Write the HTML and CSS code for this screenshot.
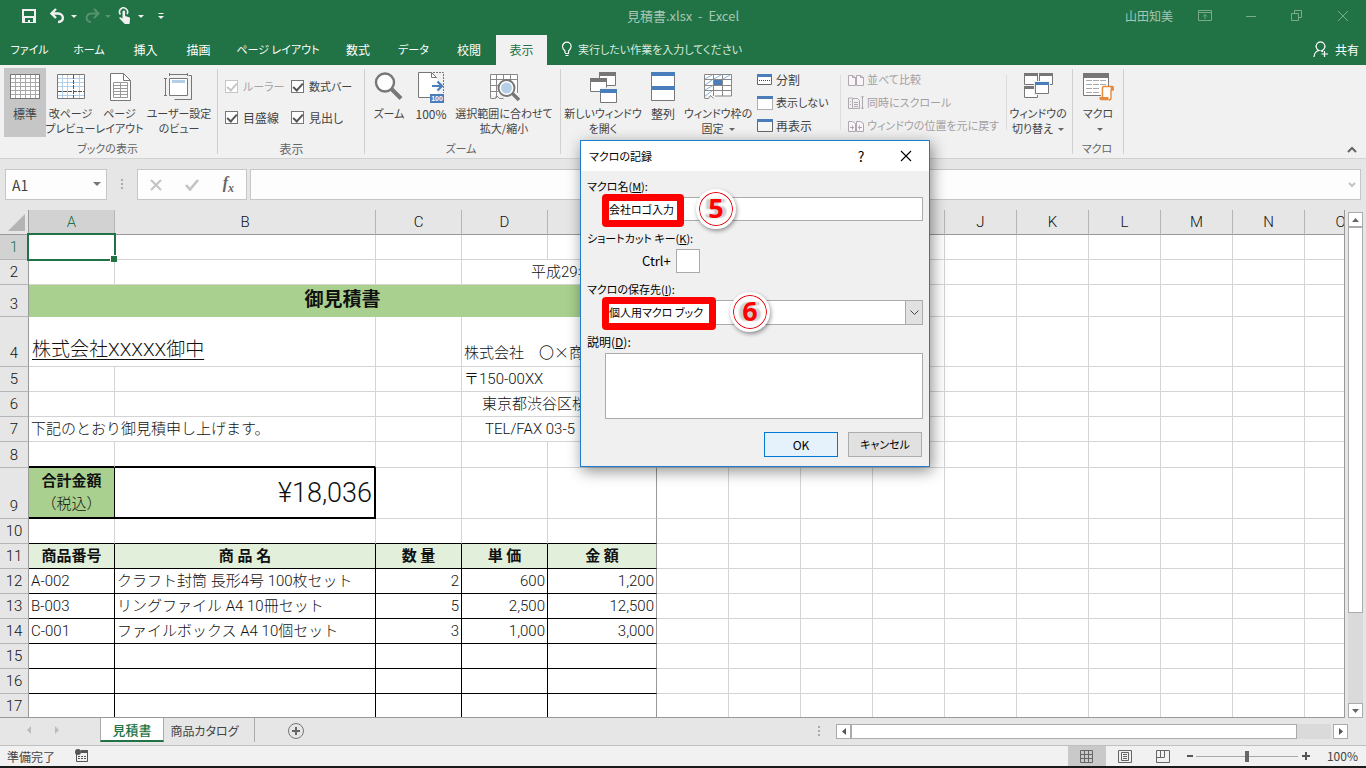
FILE: index.html
```html
<!DOCTYPE html>
<html lang="ja">
<head>
<meta charset="utf-8">
<title>見積書.xlsx - Excel</title>
<link rel="stylesheet" href="styles.css">
</head>
<body>
<div class="app">
  <header class="titlebar">
    <div class="quick">
      <button class="qbtn" aria-label="上書き保存"><svg width="16" height="16" viewBox="0 0 16 16"><path d="M1 1h14v14H1z" fill="#f1f1f1"/><path d="M3 3h10v5H3zM4 10h8v4H9v-2H7v2H4z" fill="#217346"/></svg></button>
      <button class="qbtn wide" aria-label="元に戻す"><svg width="28" height="16" viewBox="0 0 28 16"><path d="M3 5.500H9C15 5.500 16 14 9 14M7 1 2.500 5.500 7 10" fill="none" stroke="#f1f1f1" stroke-width="2.400"/><path d="M22 7h6l-3 3z" fill="#f1f1f1"/></svg></button>
      <button class="qbtn wide dim" aria-label="やり直し"><svg width="28" height="16" viewBox="0 0 28 16"><path d="M14 5.500H9C2 5.500 2 14 8 14M11 1l4.500 4.500L11 10" fill="none" stroke="#f1f1f1" stroke-width="2"/><path d="M22 7h6l-3 3z" fill="#f1f1f1"/></svg></button>
      <button class="qbtn touch" aria-label="タッチ/マウス モードの切り替え"><svg width="28" height="18" viewBox="0 0 28 18"><path d="M3.500 7.500A4 4 0 1 1 10 7" fill="none" stroke="#f1f1f1" stroke-width="1.600"/><path d="M5.500 5c0-2 2.600-2 2.600 0v4l4 1.200c1 .4 1 1 .9 2L12.500 17H7.800L2.500 11.600c-.6-1 .4-1.800 1.400-1.200l1.600 1z" fill="#f1f1f1"/><path d="M21 8h6l-3 3z" fill="#f1f1f1"/></svg></button>
      <button class="qbtn" aria-label="クイック アクセス ツール バーのユーザー設定"><svg width="8" height="8" viewBox="0 0 8 8"><path d="M1.500 1.500h5" stroke="#f1f1f1"/><path d="M1 4h6L4 7z" fill="#f1f1f1"/></svg></button>
    </div>
    <h1 class="doc">見積書.xlsx&nbsp; -&nbsp; Excel</h1>
    <div class="account">
      <span class="user">山田知美</span>
      <button class="win" aria-label="リボンの表示オプション"><svg width="14" height="12" viewBox="0 0 14 12"><path d="M.5.500h13v10H.5zM.5 2.500h13M7 9V4.500M5 6.500l2-2 2 2" fill="none" stroke="#7aab8d"/></svg></button>
      <button class="win" aria-label="最小化"><svg width="12" height="12" viewBox="0 0 12 12"><path d="M1 6.500h10" stroke="#7aab8d"/></svg></button>
      <button class="win" aria-label="元に戻す（縮小）"><svg width="12" height="12" viewBox="0 0 12 12"><path d="M.5 3.500h7v7h-7zM3.500 3V.500h7v7H8" fill="none" stroke="#7aab8d"/></svg></button>
      <button class="win" aria-label="閉じる"><svg width="12" height="12" viewBox="0 0 12 12"><path d="M1 1l10 10M11 1 1 11" stroke="#7aab8d"/></svg></button>
    </div>
  </header>

  <nav class="menubar">
    <div class="tabs">
      <button class="kn">ファイル</button><button class="kn">ホーム</button><button>挿入</button><button>描画</button><button class="kn">ページ レイアウト</button><button>数式</button><button class="kn">データ</button><button>校閲</button><button class="on">表示</button>
    </div>
    <button class="tell kn"><svg width="12" height="16" viewBox="0 0 12 16"><path d="M4 12V10C2.500 8.500 1.500 7.500 1.500 5.500a4.300 4.300 0 0 1 8.600 0C10.100 7.500 9 8.500 7.600 10v2M4 12.500h4M4.500 14.500h3" fill="none" stroke="#fff" stroke-width="1.200"/></svg>実行したい作業を入力してください</button>
    <button class="share"><svg width="16" height="17" viewBox="0 0 16 17"><path d="M1 16c.3-4 2-6 5-6.500A4.400 4.400 0 1 1 9 9.500M11.500 10v6M8.500 13h6.500M8 9.600l2 1" fill="none" stroke="#fff" stroke-width="1.200"/></svg>共有</button>
  </nav>

  <section class="ribbon">
    <div class="group g-view">
      <div class="items">
        <button class="big w42 on"><svg width="32" height="32" viewBox="0 0 32 32"><path d="M1.500 3.500h29v24h-29z" fill="#fff" stroke="#777"/><path d="M2 7.500h28M2 11.500h28M2 15.500h28M2 19.500h28M2 23.500h28M6.500 4v23M11.500 4v23M16.500 4v23M21.500 4v23M26.500 4v23" stroke="#a8a8a8"/><path d="M1.500 3.500h29v24h-29z" fill="none" stroke="#777"/></svg><span>標準</span></button>
        <button class="big w49 kn"><svg width="32" height="32" viewBox="0 0 32 32"><path d="M2.500 3.500h27v24h-27z" fill="#fff"/><path d="M3 7.500h26M3 11.500h26M3 15.500h26M3 24.500h26M7.500 4v23M12.500 4v23M24.500 4v23" stroke="#b5cfe9"/><path d="M3 20.500h26M18.500 4v23" stroke="#555" stroke-dasharray="4 1"/><path d="M2.500 3.500h27v24h-27z" fill="none" stroke="#777"/></svg><span>改ページ<br>プレビュー</span></button>
        <button class="big w49 kn"><svg width="32" height="32" viewBox="0 0 32 32"><path d="M6.500 2.500h13l7 7v20h-20z" fill="#fff" stroke="#777"/><path d="M19.500 2.500v7h7" fill="none" stroke="#777"/><path d="M9.500 11.500h14v15h-14zM9.500 14.500h14M9.500 17.500h14M9.500 20.500h14M9.500 23.500h14M16.500 12v14" fill="none" stroke="#999"/></svg><span>ページ<br>レイアウト</span></button>
        <button class="big w70 kn"><svg width="32" height="32" viewBox="0 0 32 32"><path d="M11.500 28.500h17v-24h-3" fill="none" stroke="#777"/><path d="M6.500 7.500h18v17h-18z" fill="#fff" stroke="#777"/><path d="M9 9h13v3H9z" fill="#b5cfe9"/><path d="M6.500 3.500h18M6.500 2v3M24.500 2v3M2.500 7.500v17M1 7.500h3M1 24.500h3" stroke="#777"/></svg><span>ユーザー設定<br>のビュー</span></button>
      </div>
      <div class="cap kn">ブックの表示</div>
    </div>
    <div class="group g-show">
      <div class="checks">
        <label class="off kn"><input type="checkbox" checked disabled>ルーラー</label>
        <label class="kn"><input type="checkbox" checked>数式バー</label>
        <label><input type="checkbox" checked>目盛線</label>
        <label><input type="checkbox" checked>見出し</label>
      </div>
      <div class="cap">表示</div>
    </div>
    <div class="group g-zoom">
      <div class="items">
        <button class="big w42 kn"><svg width="32" height="32" viewBox="0 0 32 32"><circle cx="12" cy="11.500" r="9" fill="#fff" stroke="#777" stroke-width="2.400"/><path d="M18.500 18 28 27.500" stroke="#777" stroke-width="4"/></svg><span>ズーム</span></button>
        <button class="big w42"><svg width="32" height="32" viewBox="0 0 32 32"><path d="M3.500 1.500h12l7 7v18h-19z" fill="#fff"/><path d="M15 26.500H3.500v-25h13v5h5" fill="none" stroke="#777"/><path d="M16.500 1.500l5 5" stroke="#777"/><path d="M18 1.500h10.500V22" fill="none" stroke="#777" stroke-dasharray="2 1"/><path d="M17 15h10M22.500 10.500 27 15l-4.500 4.500" fill="none" stroke="#4a7ebb" stroke-width="2.200"/><rect x="15" y="23" width="14" height="9" fill="#4a7ebb"/><text x="22" y="30" text-anchor="middle" class="tiny">100</text></svg><span>100%</span></button>
        <button class="big w104 kn"><svg width="32" height="32" viewBox="0 0 32 32"><path d="M2.500 3.500h27v21h-27z" fill="#fff"/><path d="M2.500 27V3.500h27V22M3 8.500h26M3 14.500h7M3 20.500h7M8.500 4v23M15.500 4v5M22.500 4v5M2.500 27.500h5l1-3 3 3h4" fill="none" stroke="#888"/><circle cx="18.500" cy="17" r="8" fill="#fff" stroke="#777" stroke-width="2"/><circle cx="18.500" cy="17" r="5.500" fill="#b5cfe9"/><path d="M24.500 22.500 31 29" stroke="#777" stroke-width="3.500"/></svg><span>選択範囲に合わせて<br>拡大/縮小</span></button>
      </div>
      <div class="cap kn">ズーム</div>
    </div>
    <div class="group g-window">
      <div class="items">
        <button class="big w78 kn"><svg width="32" height="32" viewBox="0 0 32 32"><g fill="#fff" stroke="#777"><path d="M12.500 2.500h16v12h-16z"/><path d="M3.500 7.500h16v13h-16z"/><path d="M13.500 19.500h16v12h-16z"/></g><path d="M12 1h17v4H12zM3 7h17v4H3z" fill="#777"/><path d="M12.500 17.500h18" stroke="#f1f1f1" stroke-width="2"/><path d="M13 18h17v4H13z" fill="#4a7ebb"/></svg><span>新しいウィンドウ<br>を開く</span></button>
        <button class="big w42"><svg width="32" height="32" viewBox="0 0 32 32"><path d="M4.500 1.500h23v28h-23z" fill="#fff" stroke="#777"/><path d="M4 1h24v4H4zM4 15h24v4H4z" fill="#4a7ebb"/></svg><span>整列</span></button>
        <button class="big w68 kn"><svg width="32" height="32" viewBox="0 0 32 32"><path d="M2.500 3.500h27v21h-27z" fill="#fff"/><path d="M2.500 27V3.500h27V25H13M3 8.500h26M3 14.500h26M3 19.500h26M11.500 4v21M20.500 4v21M2.500 27.500h4l2-3 3 3" fill="none" stroke="#888"/><path d="m3 8 7-4M12 8l7-4M21 8l7-4M3 14l7-5M3 19l7-4M3 25l7-5" stroke="#83b0e0"/><path d="M12 9h8v5h-8z" fill="#4a7ebb"/></svg><span>ウィンドウ枠の<br>固定<i class="dd"></i></span></button>
      </div>
      <div class="list">
        <button><svg width="16" height="16" viewBox="0 0 16 16"><path d="M.5 2.500h14v10H.5z" fill="#fff" stroke="#666"/><path d="M0 2h15v3H0z" fill="#4a7ebb"/><path d="M2 8.500h11" stroke="#444" stroke-dasharray="1 1"/></svg>分割</button>
        <button class="kn"><svg width="16" height="16" viewBox="0 0 16 16"><path d="M.5 2.500h15v12H.5z" fill="#fff" stroke="#666" stroke-dasharray="1 1"/><path d="M0 1h16v3H0z" fill="#4a7ebb"/></svg>表示しない</button>
        <button><svg width="16" height="16" viewBox="0 0 16 16"><path d="M.5 2.500h15v11H.5z" fill="#f6f6f6" stroke="#666"/><path d="M0 1h16v3H0z" fill="#4a7ebb"/></svg>再表示</button>
      </div>
      <div class="list dim kn">
        <button disabled><svg width="16" height="16" viewBox="0 0 16 16"><path d="M.5 3.500h4l3 2v8h-7zM8.500 3.500h4l3 2v8h-7zM4.500 3.500v2h3M12.500 3.500v2h3" fill="#f8f4f8" stroke="#b0a8b0"/></svg>並べて比較</button>
        <button disabled><svg width="16" height="16" viewBox="0 0 16 16"><path d="M4.500 3H.5v10.500h4M4.500 3.500h5l2 2v8h-7zM6 7.500h4M6 9.500h4M6 11.500h4M2 6.500h1M2 9.500h1M14.500 1v13M13 2.500 14.500 1 16 2.500M13 12.500l1.500 1.500 1.500-1.500" fill="none" stroke="#b0a8b0"/></svg>同時にスクロール</button>
        <button disabled><svg width="16" height="16" viewBox="0 0 16 16"><path d="M.5 3.500h4l3 2v8h-7zM8.500 3.500h4l3 2v8h-7zM2 9.500h4M4.500 7.500v4M10 9.500h4M11.500 7.500v4" fill="#f8f4f8" stroke="#b0a8b0"/></svg>ウィンドウの位置を元に戻す</button>
      </div>
      <div class="items">
        <button class="big w62 kn"><svg width="32" height="32" viewBox="0 0 32 32"><g fill="#fff" stroke="#777"><path d="M2.500 2.500h13v11h-13zM17.500 2.500h13v11h-13zM2.500 15.500h13v11h-13z"/></g><path d="M2 2h14v3H2zM17 2h14v3H17zM2 15h14v3H2z" fill="#777"/><path d="M12 10h16v14H12z" fill="#f1f1f1"/><path d="M13.500 11.500h13v11h-13z" fill="#fff" stroke="#777"/><path d="M13 11h14v3H13z" fill="#4a7ebb"/></svg><span>ウィンドウの<br>切り替え<i class="dd"></i></span></button>
      </div>
    </div>
    <div class="group g-macro">
      <div class="items">
        <button class="big w42 kn"><svg width="32" height="32" viewBox="0 0 32 32"><path d="M1.500 2.500h25v22h-25z" fill="#fff" stroke="#777"/><path d="M1 2h26v5H1z" fill="#777"/><path d="M4 9.500h6M11 9.500h6M18 9.500h6M4 13.500h6M11 13.500h6M18 13.500h6M4 17.500h6M11 17.500h6M4 21.500h6M11 21.500h6" stroke="#aaa"/><path d="M20 17h11v3h-2v8c0 1-1 2-2 2H18v-3h2z" fill="#fff" stroke="#f1f1f1" stroke-width="2"/><path d="M20.500 26V17c0-1 .5-1.500 1.500-1.500h8c1 0 1.500 1 1 3.500h-2v7.500c0 2-1 2.500-2 2.500" fill="#fff" stroke="#e8883a" stroke-width="1.400"/><path d="M17.500 26h9v2.500h1.500v.8h-9c-1 0-2-1.300-1.500-3.300zM28.500 15.500h3v3.500h-2.500z" fill="#e8883a"/></svg><span>マクロ<br><i class="dd"></i></span></button>
      </div>
      <div class="cap kn">マクロ</div>
    </div>
    <button class="collapse" aria-label="リボンを折りたたむ"><svg width="10" height="8" viewBox="0 0 10 8"><path d="M1 6l4-4 4 4" fill="none" stroke="#666" stroke-width="2"/></svg></button>
  </section>

  <section class="formula">
    <div class="namebox"><input type="text" value="A1" aria-label="名前ボックス"><svg width="8" height="5" viewBox="0 0 8 5"><path d="M0 0h8L4 4z" fill="#777"/></svg></div>
    <span class="dots"></span>
    <div class="fx">
      <button aria-label="キャンセル"><svg width="12" height="12" viewBox="0 0 12 12"><path d="M1 1l10 10M11 1 1 11" stroke="#c3c3c3" stroke-width="2"/></svg></button>
      <button aria-label="入力"><svg width="14" height="12" viewBox="0 0 14 12"><path d="M1 6l4 4.500L13 1" fill="none" stroke="#c3c3c3" stroke-width="2.600"/></svg></button>
      <button aria-label="関数の挿入" class="fxi">f<sub>x</sub></button>
    </div>
    <div class="bar"><input type="text" aria-label="数式バー"><svg width="8" height="6" viewBox="0 0 8 6"><path d="M1 1l3 3 3-3" fill="none" stroke="#c3c3c3" stroke-width="2"/></svg></div>
  </section>

  <main class="work">
    <div class="sheet">
      <table class="grid">
        <colgroup><col class="c-h"><col class="c-a"><col class="c-b"><col class="c-a"><col class="c-a"><col class="c-e"><col span="10" class="c-f"></colgroup>
        <thead><tr><th class="corner"><svg width="17" height="17" viewBox="0 0 17 17"><path d="M17 0v17H0z" fill="#b4b4b4"/></svg></th><th class="sel">A</th><th>B</th><th>C</th><th>D</th><th>E</th><th>F</th><th>G</th><th>H</th><th>I</th><th>J</th><th>K</th><th>L</th><th>M</th><th>N</th><th>O</th></tr></thead>
        <tbody>
          <tr><th class="sel">1</th><td class="cur"><span class="cursor"></span></td><td></td><td></td><td></td><td class="pb"></td></tr>
          <tr><th>2</th><td></td><td></td><td></td><td colspan="2" class="pb date">平成29年</td></tr>
          <tr class="r3"><th>3</th><td colspan="5" class="pb title">御見積書</td></tr>
          <tr class="r4"><th>4</th><td colspan="2" class="client"><u>株式会社XXXXX御中</u></td><td></td><td colspan="2" class="pb">株式会社　〇<span class="jp">×</span>商</td></tr>
          <tr><th>5</th><td></td><td></td><td></td><td colspan="2" class="pb">〒150-00XX</td></tr>
          <tr><th>6</th><td></td><td></td><td></td><td colspan="2" class="pb indent">東京都渋谷区桜</td></tr>
          <tr><th>7</th><td colspan="2">下記のとおり御見積申し上げます。</td><td></td><td colspan="2" class="pb tel">TEL/FAX 03-5</td></tr>
          <tr class="r8"><th>8</th><td class="b2"></td><td class="b2"></td><td></td><td></td><td class="pb"></td></tr>
          <tr class="r9"><th>9</th><td class="b2 sumh"><b>合計金額</b><br>（税込）</td><td class="b2 sum">¥18,036</td><td></td><td></td><td class="pb"></td></tr>
          <tr class="b1"><th>10</th><td></td><td></td><td></td><td></td><td class="pb"></td></tr>
          <tr class="b1 ln hd"><th>11</th><td>商品番号</td><td>商 品 名</td><td>数 量</td><td>単 価</td><td class="pb">金 額</td></tr>
          <tr class="b1 ln"><th>12</th><td>A-002</td><td>クラフト封筒 長形4号 100枚セット</td><td class="n">2</td><td class="n">600</td><td class="pb n">1,200</td></tr>
          <tr class="b1 ln"><th>13</th><td>B-003</td><td>リングファイル A4 10冊セット</td><td class="n">5</td><td class="n">2,500</td><td class="pb n">12,500</td></tr>
          <tr class="b1 ln"><th>14</th><td>C-001</td><td>ファイルボックス A4 10個セット</td><td class="n">3</td><td class="n">1,000</td><td class="pb n">3,000</td></tr>
          <tr class="b1 ln"><th>15</th><td></td><td></td><td></td><td></td><td class="pb"></td></tr>
          <tr class="b1 ln"><th>16</th><td></td><td></td><td></td><td></td><td class="pb"></td></tr>
          <tr class="b1 ln"><th>17</th><td></td><td></td><td></td><td></td><td class="pb"></td></tr>
        </tbody>
      </table>
    </div>
    <div class="vscroll">
      <button aria-label="上へ"><svg width="7" height="4" viewBox="0 0 7 4"><path d="M0 4h7L3.500 0z" fill="#666"/></svg></button>
      <div class="vtrack"><div class="vthumb"></div></div>
      <button aria-label="下へ"><svg width="7" height="4" viewBox="0 0 7 4"><path d="M0 0h7L3.500 4z" fill="#666"/></svg></button>
    </div>
  </main>

  <div class="sheetbar">
    <div class="nav"><button aria-label="前のシート"><svg width="5" height="8" viewBox="0 0 5 8"><path d="M5 0v8L1 4z" fill="#bbb"/></svg></button><button aria-label="次のシート"><svg width="5" height="8" viewBox="0 0 5 8"><path d="M0 0v8l4-4z" fill="#bbb"/></svg></button></div>
    <button class="stab on">見積書</button><button class="stab">商品カタログ</button>
    <button class="add" aria-label="新しいシート"><svg width="18" height="18" viewBox="0 0 18 18"><circle cx="9" cy="9" r="7.500" fill="none" stroke="#777"/><path d="M9 5v8M5 9h8" stroke="#666" stroke-width="2"/></svg></button>
    <span class="dots"></span>
    <div class="hscroll">
      <button aria-label="左へ"><svg width="4" height="7" viewBox="0 0 4 7"><path d="M4 0v7L0 3.500z" fill="#555"/></svg></button>
      <div class="htrack"><div class="hthumb"></div></div>
      <button aria-label="右へ"><svg width="4" height="7" viewBox="0 0 4 7"><path d="M0 0v7l4-3.500z" fill="#555"/></svg></button>
    </div>
  </div>

  <footer class="status">
    <span>準備完了</span>
    <svg class="rec" width="14" height="14" viewBox="0 0 14 14"><path d="M1.500 5v7.500h11v-10H6M6 3h7" fill="none" stroke="#555"/><path d="M6 1h7v3H6z" fill="#555"/><circle cx="3" cy="3" r="3" fill="#555"/><path d="M3 7.500h2M6 7.500h2M9 7.500h2M3 9.500h2M6 9.500h2M9 9.500h2" stroke="#555"/></svg>
    <div class="views">
      <button class="on" aria-label="標準"><svg width="14" height="14" viewBox="0 0 14 14"><path d="M.5 1.500h12v12H.5zM.5 5.500h12M.5 9.500h12M4.500 1.500v12M8.500 1.500v12" fill="none" stroke="#666"/></svg></button>
      <button aria-label="ページ レイアウト"><svg width="14" height="14" viewBox="0 0 14 14"><path d="M.5 1.500h13v12H.5zM3.500 3.500h7v8h-7zM5 5.500h4M5 7.500h4M5 9.500h4" fill="none" stroke="#666"/></svg></button>
      <button aria-label="改ページ プレビュー"><svg width="14" height="14" viewBox="0 0 14 14"><path d="M.5 1.500h13v12H.5zM.5 8.500h8v-7M4.500 1.500v7" fill="none" stroke="#666"/></svg></button>
    </div>
    <button class="zb" aria-label="縮小"><svg width="8" height="8" viewBox="0 0 8 8"><path d="M1 4h6" stroke="#555" stroke-width="2"/></svg></button>
    <input class="zoom" type="range" min="0" max="100" value="50" aria-label="ズーム">
    <button class="zb" aria-label="拡大"><svg width="8" height="8" viewBox="0 0 8 8"><path d="M0 4h8M4 0v8" stroke="#555" stroke-width="2"/></svg></button>
    <span class="pct">100%</span>
  </footer>
</div>

<form class="dialog" role="dialog" aria-labelledby="dlg-title">
  <div class="dhead"><span id="dlg-title">マクロの記録</span><button type="button" class="help">?</button><button type="button" aria-label="閉じる"><svg width="12" height="12" viewBox="0 0 12 12"><path d="M1 1l10 10M11 1 1 11" stroke="#000" stroke-width="1.100"/></svg></button></div>
  <div class="dbody">
    <label for="m-name">マクロ名(<u>M</u>):</label>
    <div class="field"><input id="m-name" type="text" value="会社ロゴ入力"><span class="mark m5"></span><span class="num n5">5</span></div>
    <label for="m-key">ショートカット キー(<u>K</u>):</label>
    <div class="field key"><span>Ctrl+</span><input id="m-key" type="text"></div>
    <label for="m-store">マクロの保存先(<u>I</u>):</label>
    <div class="field"><select id="m-store"><option>個人用マクロ ブック</option></select><span class="arrow"><svg width="9" height="6" viewBox="0 0 9 6"><path d="M.5.500l4 4 4-4" fill="none" stroke="#444"/></svg></span><span class="mark m6"></span><span class="num n6">6</span></div>
    <label for="m-desc" class="kj">説明(<u>D</u>):</label>
    <div class="field"><textarea id="m-desc"></textarea></div>
    <div class="acts"><button type="button" class="ok">OK</button><button type="button">キャンセル</button></div>
  </div>
</form>
<script src="grid.js"></script>
</body>
</html>
```
FILE: styles.css
```css
* { box-sizing: border-box; }
body { margin: 0; font: 12px/15px "Noto Sans CJK JP", "Liberation Sans", sans-serif; font-feature-settings: "palt"; color: #444; }
button, input, select, textarea { font: inherit; font-feature-settings: inherit; color: inherit; margin: 0; padding: 0; border: 0; background: none; border-radius: 0; outline: 0; white-space: nowrap; }
svg { display: block; flex: none; }
.kn { font-size: 11px; }
.app { display: flex; flex-direction: column; height: 100vh; min-height: 480px; overflow: hidden; background: #e6e6e6; border-bottom: 2px solid #1a1a1a; }

.titlebar { flex: none; display: grid; grid-template-columns: 1fr auto 1fr; align-items: center; height: 32px; background: #217346; }
.quick { display: flex; align-items: center; padding-left: 21px; }
.qbtn { width: 16px; margin-right: 12px; }
.qbtn.wide { width: 28px; margin-right: 6px; }
.qbtn.touch { width: 28px; margin-right: 12px; }
.dim.qbtn { opacity: .25; }
.doc { margin: 0; padding-bottom: 2px; font-size: 13px; font-weight: 400; color: #a6c7b3; }
.account { display: flex; justify-content: flex-end; align-items: center; color: #a6c7b3; }
.user { margin-right: 9px; padding-bottom: 2px; }
.win { width: 46px; display: flex; justify-content: center; }

.menubar { flex: none; display: flex; height: 33px; padding-top: 3px; background: #217346; color: #fff; }
.tabs { display: grid; grid-template-columns: 59px 60px 53px 53px 106px 54px 57px 54px 51px; }
.menubar button { padding-bottom: 2px; }
.tabs .on { background: #f1f1f1; color: #217346; }
.tell { display: flex; align-items: center; gap: 5px; margin-left: 14px; color: #d9e9df; }
.share { display: flex; align-items: center; gap: 6px; margin-left: auto; margin-right: 7px; }

.ribbon { flex: none; display: flex; height: 94px; background: #f1f1f1; border-bottom: 1px solid #d2d2d2; }
.group { flex: none; display: flex; flex-wrap: wrap; align-content: space-between; height: 85px; margin-top: 4px; border-right: 1px solid #d0d0d0; }
.g-view { width: 218px; padding-left: 4px; }
.g-show { width: 147px; padding-left: 7px; }
.g-zoom { width: 196px; padding-left: 3px; }
.g-window { width: 512px; padding-left: 3px; flex-wrap: nowrap; align-items: flex-start; }
.g-macro { width: 51px; padding-left: 4px; }
.cap { width: 100%; padding-right: 6px; line-height: 11px; text-align: center; color: #666; }
.items { display: flex; margin-top: -1px; }
.big { display: flex; flex-direction: column; align-items: center; gap: 3px; height: 69px; padding-top: 3px; }
.big.on { background: #c6c6c6; }
.w42 { width: 42px; } .w49 { width: 49px; } .w62 { width: 62px; } .w68 { width: 68px; } .w70 { width: 70px; } .w78 { width: 78px; } .w104 { width: 104px; }
.tiny { font: bold 7px "Liberation Sans", sans-serif; fill: #fff; }
.dd { display: inline-block; margin: 0 0 2px 5px; border: 3px solid transparent; border-top-color: #666; border-bottom: 0; }
.checks { display: grid; grid-template-columns: 66px 66px; grid-auto-rows: 31px; padding-top: 2px; }
.checks label { display: flex; align-items: center; gap: 5px; white-space: nowrap; }
.checks .off { color: #a6a6a6; }
.checks input { appearance: none; flex: none; width: 13px; height: 13px; border: 1px solid #777; background: #fff; display: grid; place-content: center; }
.checks input::before { content: ""; width: 4px; height: 8px; margin-top: -2px; border: solid #555; border-width: 0 2px 2px 0; transform: rotate(42deg); }
.checks .off input, .checks .off input::before { border-color: #c6c6c6; }
.list { flex: none; display: flex; flex-direction: column; width: 83px; margin: -1px 0 0 5px; }
.list button { flex: none; display: flex; align-items: center; gap: 3px; height: 23px; }
.list.dim { width: 167px; height: 55px; margin: 6px 0 0 0; padding-left: 7px; border: solid #ddd; border-width: 0 1px; color: #a3a0a3; justify-content: center; }
.collapse { align-self: flex-end; margin: 0 9px 4px auto; width: 10px; }

.formula { flex: none; display: flex; align-items: flex-start; height: 51px; padding: 10px 5px 0 5px; }
.namebox, .fx, .bar { display: flex; align-items: center; height: 31px; border: 1px solid #c6c6c6; background: #fdfdfd; }
.namebox { width: 102px; padding: 0 5px 0 6px; }
.namebox input { flex: 1; min-width: 0; font-size: 14px; padding-top: 2px; }
.dots { width: 2px; height: 11px; margin: 10px 14px; background: repeating-linear-gradient(#aaa 0 2px, transparent 2px 4px); }
.fx { width: 110px; justify-content: space-between; padding: 0 12px; }
.fxi { padding-bottom: 3px; font: italic bold 16px/16px "Liberation Serif", serif; color: #666; }
.fxi sub { font-size: 12px; line-height: 1px; }
.bar { flex: 1; margin-left: 3px; padding-right: 4px; }
.bar input { flex: 1; }

.work { flex: 1; min-height: 0; display: flex; }
.sheet { flex: 1; min-width: 0; overflow: hidden; border-right: 1px solid #999; border-bottom: 1px solid #999; background: #fff; }
.grid { table-layout: fixed; width: 1377px; border-collapse: separate; border-spacing: 0; color: #111; font: 300 15px/22px Roboto, "Noto Sans CJK JP", sans-serif; font-feature-settings: normal; }
.c-h { width: 29px; } .c-a { width: 86px; } .c-b { width: 261px; } .c-e { width: 109px; } .c-f { width: 72px; }
.grid tr { height: 25px; }
.grid th, .grid td { padding: 0 2px 1px; border: solid #d4d4d4; border-width: 0 1px 1px 0; vertical-align: bottom; white-space: nowrap; text-align: left; }
.grid th { padding: 0 0 1px; background: #e6e6e6; font-weight: 300; text-align: center; border-color: #b5b5b5; }
.grid thead th { border-bottom-color: #999; }
.grid tbody th, .grid .corner { border-right-color: #999; }
.corner svg { margin: 0 0 2px 8px; }
.grid th.sel { background: #d2d2d2; color: #217346; }
.grid td.pb { border-right-color: #999; }
.grid .r3 { height: 32px; } .grid .r4 { height: 50px; } .grid .r8 { height: 26px; } .grid .r9 { height: 51px; }
.grid .r4 th, .grid .r4 td.pb { padding-bottom: 2px; }
.jp { font-family: "Noto Sans CJK JP", sans-serif; }
.grid .date { padding-left: 69px; }
.grid .title { background: #a9d08e; border-color: #a9d08e; font-size: 19px; line-height: 30px; font-weight: 700; text-align: center; }
.grid .client { font-size: 19px; line-height: 30px; padding-left: 3px; text-underline-offset: 3px; }
.grid .indent { padding-left: 20px; }
.grid .tel { padding-left: 23px; }
.grid td.b2 { border-bottom: 2px solid #000; }
.grid .sumh { background: #a9d08e; border-right-color: #000; text-align: center; line-height: 23px; }
.grid b { font-weight: 700; }
.grid .sum { border-right: 2px solid #000; text-align: right; font-size: 27px; line-height: 46px; }
.grid .b1 td:nth-child(-n+6) { border-bottom-color: #000; }
.grid .ln td:nth-child(-n+5) { border-right-color: #000; }
.grid .hd td:nth-child(-n+6) { background: #e2efda; font-weight: 700; text-align: center; }
.grid .n { text-align: right; }
.grid .cur { position: relative; }
.cursor { position: absolute; inset: -2px; border: 2px solid #217346; }
.cursor::after { content: ""; position: absolute; right: -3px; bottom: -3px; width: 6px; height: 6px; background: #217346; border: solid #fff; border-width: 1px 0 0 1px; }

.vscroll { flex: none; display: flex; flex-direction: column; width: 15px; margin: 2px 3px 0 3px; }
.vscroll button, .hscroll button { display: flex; align-items: center; justify-content: center; flex: none; width: 15px; height: 15px; border: 1px solid #ababab; background: #fff; }
.vtrack { flex: 1; background: #dadada; }
.vthumb { height: 81%; border: 1px solid #ababab; background: #fff; }

.sheetbar { flex: none; display: flex; height: 28px; border-bottom: 1px solid #c0c0c0; }
.nav { display: flex; gap: 24px; width: 100px; padding-left: 26px; }
.nav button { padding-bottom: 3px; }
.stab { width: 91px; height: 24px; }
.stab.on { width: 64px; background: #fff; color: #217346; font-size: 13px; font-weight: 500; border: solid #ababab; border-width: 0 1px; border-bottom: 2px solid #217346; }
.sheetbar .stab:not(.on) { border-right: 1px solid #ababab; padding-right: 9px; }
.add { margin: 0 0 1px 32px; width: 18px; align-self: center; }
.sheetbar .dots { margin: 8px 16px 0 auto; }
.hscroll { flex: none; display: flex; width: 38%; max-width: 512px; height: 15px; margin: 6px 18px 0 0; }
.htrack { flex: 1; background: #dadada; margin-right: 2px; }
.hthumb { width: 93%; height: 15px; border: 1px solid #ababab; background: #fff; }

.status { flex: none; display: flex; align-items: center; height: 20px; padding-left: 7px; background: #f1f1f1; }
.rec { margin-left: 20px; }
.views { display: flex; margin-left: auto; height: 20px; }
.views button { width: 38px; display: flex; align-items: center; justify-content: center; }
.views .on { background: #c9c9c9; }
.zb { width: 8px; margin-left: 4px; }
.zoom { appearance: none; width: 102px; height: 12px; margin: 0 0 0 2px; background: linear-gradient(#aaa, #aaa) center / 100% 1px no-repeat; }
.zoom::-webkit-slider-thumb { appearance: none; width: 4px; height: 11px; background: #666; }
.pct { width: 34px; margin: 0 8px 0 14px; padding-bottom: 2px; text-align: right; }

.dialog { position: absolute; left: 580px; top: 140px; width: 350px; margin: 0; border: 1px solid #1c7cd0; background: #f0f0f0; color: #000; font-size: 11px; box-shadow: 2px 4px 14px rgba(0, 0, 0, .45); }
.dhead { display: flex; align-items: center; height: 30px; padding: 0 17px 0 8px; background: #fff; }
.dhead span { flex: 1; }
.dhead .help { width: 8px; margin-right: 35px; font-size: 14px; }
.dbody { display: flex; flex-direction: column; padding: 7px 6px 9px; }
.dbody label { line-height: 16px; }
.kj { font-size: 12px; }
.field { position: relative; display: flex; padding-left: 18px; }
.field input, .field select, .field textarea { flex: 1; min-width: 0; height: 24px; padding: 0 3px 1px; border: 1px solid #ababab; background: #fff; appearance: none; }
.field input { margin: 3px 0 9px; }
.field.key { align-items: center; gap: 5px; padding-left: 55px; font-size: 13px; }
.field.key input { flex: none; width: 24px; margin: 3px 0 8px; }
.field.key span { margin-bottom: 6px; }
.field select { height: 25px; margin: 3px 0 9px; }
.field textarea { height: 66px; margin-top: 3px; resize: none; }
.arrow { position: absolute; right: 0; top: 3px; width: 18px; height: 25px; display: grid; place-content: center; border: 1px solid #ababab; background: #e1e1e1; pointer-events: none; }
.mark { position: absolute; left: 15px; top: 0; width: 82px; height: 33px; border: 7px solid #f00; border-radius: 4px; pointer-events: none; }
.m6 { width: 114px; }
.num { position: absolute; top: -5px; width: 40px; height: 40px; border: 3px solid #fff; border-radius: 50%; background: #fff; box-shadow: inset 0 0 0 1px #e8000b, 1px 2px 4px rgba(0, 0, 0, .4); color: #f00; font: bold 27px/32px "Noto Sans", sans-serif; text-align: center; text-shadow: -4px 0 2px #ccc, 4px 0 2px #ccc; pointer-events: none; }
.n5 { left: 109px; }
.n6 { left: 143px; }
.acts { display: flex; justify-content: flex-end; gap: 10px; padding: 13px 1px 0 0; }
.acts button { width: 74px; height: 25px; border: 1px solid #adadad; background: #e1e1e1; }
.acts .ok { border-color: #0078d7; background: #e5f1fb; font-size: 12px; }
```
FILE: grid.js
```js
// Pads every body row with empty cells up to the last visible column.
const lastColumn = 15;
document.querySelectorAll(".grid tbody tr").forEach((row) => {
  const used = [...row.querySelectorAll("td")].reduce((n, cell) => n + cell.colSpan, 0);
  for (let i = used; i < lastColumn; i++) row.append(document.createElement("td"));
});
```
